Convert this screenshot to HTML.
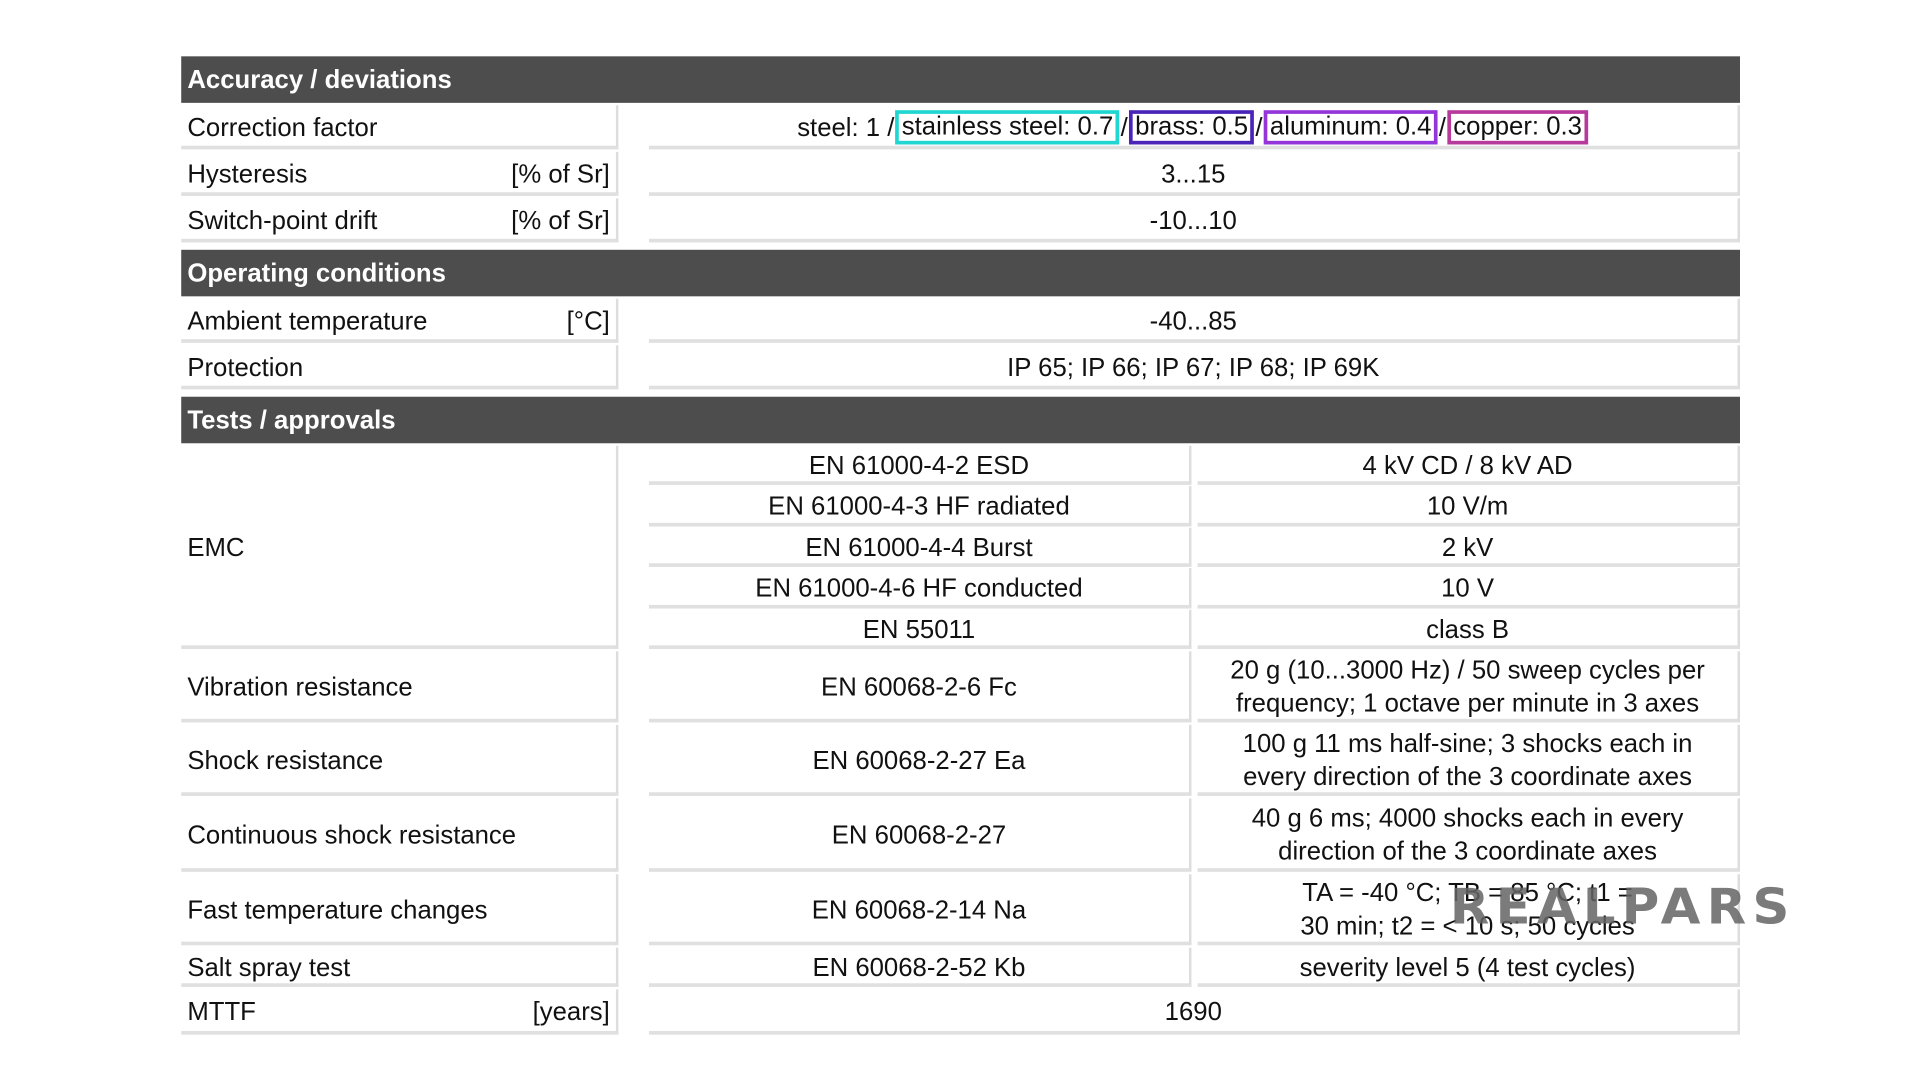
<!DOCTYPE html>
<html><head><meta charset="utf-8"><style>
html,body{margin:0;padding:0;background:#fff;width:1920px;height:1080px;overflow:hidden}
#w{position:absolute;left:0;top:0;width:1568px;height:882px;transform:scale(1.22449);transform-origin:0 0;font-family:"Liberation Sans",Arial,sans-serif;color:#111;font-size:21px}
.h{position:absolute;left:148px;width:1273px;background:#4d4d4d;color:#fff;font-weight:bold;font-size:21px;padding-left:5px;padding-top:2px;box-sizing:border-box;display:flex;align-items:center}
.c{position:absolute;background:#fff;border-right:2px solid #ddd;border-bottom:3px solid #e0e0e0;box-sizing:border-box;display:flex;align-items:center;justify-content:center;text-align:center;line-height:27px;padding-top:3px}
.l{justify-content:space-between;padding-left:5px;padding-right:5px;text-align:left}
.b{border:3px solid;padding:0 2px;margin:0 1px;line-height:22px}
#wm{position:absolute;left:1184px;top:717px;font-size:42px;font-weight:bold;color:rgba(100,100,100,0.85);letter-spacing:5px;font-family:"DejaVu Sans","Liberation Sans",sans-serif;transform:scaleY(1.0);transform-origin:0 0}
</style></head><body><div id="w">
<div class="h" style="top:46px;height:38px">Accuracy / deviations</div>
<div class="c l" style="left:148px;width:357px;top:86px;height:36px"><span>Correction factor</span></div>
<div class="c" style="left:530px;width:891px;top:86px;height:36px">steel: 1 /<span class="b" style="border-color:#1fd6d0">stainless steel: 0.7</span>/<span class="b" style="border-color:#4a24b8">brass: 0.5</span>/<span class="b" style="border-color:#9335d8">aluminum: 0.4</span>/<span class="b" style="border-color:#b8399c">copper: 0.3</span></div>
<div class="c l" style="left:148px;width:357px;top:124px;height:36px"><span>Hysteresis</span><span>[% of Sr]</span></div>
<div class="c" style="left:530px;width:891px;top:124px;height:36px">3...15</div>
<div class="c l" style="left:148px;width:357px;top:162px;height:36px"><span>Switch-point drift</span><span>[% of Sr]</span></div>
<div class="c" style="left:530px;width:891px;top:162px;height:36px">-10...10</div>
<div class="h" style="top:204px;height:38px">Operating conditions</div>
<div class="c l" style="left:148px;width:357px;top:244px;height:36px"><span>Ambient temperature</span><span>[°C]</span></div>
<div class="c" style="left:530px;width:891px;top:244px;height:36px">-40...85</div>
<div class="c l" style="left:148px;width:357px;top:282px;height:36px"><span>Protection</span></div>
<div class="c" style="left:530px;width:891px;top:282px;height:36px">IP 65; IP 66; IP 67; IP 68; IP 69K</div>
<div class="h" style="top:324px;height:38px">Tests / approvals</div>
<div class="c l" style="left:148px;width:357px;top:364px;height:166px"><span>EMC</span></div>
<div class="c" style="left:530px;width:443px;top:364px;height:32px">EN 61000-4-2 ESD</div>
<div class="c" style="left:978px;width:443px;top:364px;height:32px">4 kV CD / 8 kV AD</div>
<div class="c" style="left:530px;width:443px;top:397px;height:33px">EN 61000-4-3 HF radiated</div>
<div class="c" style="left:978px;width:443px;top:397px;height:33px">10 V/m</div>
<div class="c" style="left:530px;width:443px;top:431px;height:32px">EN 61000-4-4 Burst</div>
<div class="c" style="left:978px;width:443px;top:431px;height:32px">2 kV</div>
<div class="c" style="left:530px;width:443px;top:464px;height:33px">EN 61000-4-6 HF conducted</div>
<div class="c" style="left:978px;width:443px;top:464px;height:33px">10 V</div>
<div class="c" style="left:530px;width:443px;top:498px;height:32px">EN 55011</div>
<div class="c" style="left:978px;width:443px;top:498px;height:32px">class B</div>
<div class="c l" style="left:148px;width:357px;top:532px;height:58px"><span>Vibration resistance</span></div>
<div class="c" style="left:530px;width:443px;top:532px;height:58px">EN 60068-2-6 Fc</div>
<div class="c" style="left:978px;width:443px;top:532px;height:58px">20 g (10...3000 Hz) / 50 sweep cycles per<br>frequency; 1 octave per minute in 3 axes</div>
<div class="c l" style="left:148px;width:357px;top:592px;height:58px"><span>Shock resistance</span></div>
<div class="c" style="left:530px;width:443px;top:592px;height:58px">EN 60068-2-27 Ea</div>
<div class="c" style="left:978px;width:443px;top:592px;height:58px">100 g 11 ms half-sine; 3 shocks each in<br>every direction of the 3 coordinate axes</div>
<div class="c l" style="left:148px;width:357px;top:652px;height:60px"><span>Continuous shock resistance</span></div>
<div class="c" style="left:530px;width:443px;top:652px;height:60px">EN 60068-2-27</div>
<div class="c" style="left:978px;width:443px;top:652px;height:60px">40 g 6 ms; 4000 shocks each in every<br>direction of the 3 coordinate axes</div>
<div class="c l" style="left:148px;width:357px;top:714px;height:58px"><span>Fast temperature changes</span></div>
<div class="c" style="left:530px;width:443px;top:714px;height:58px">EN 60068-2-14 Na</div>
<div class="c" style="left:978px;width:443px;top:714px;height:58px">TA = -40 °C; TB = 85 °C; t1 =<br>30 min; t2 = &lt; 10 s; 50 cycles</div>
<div class="c l" style="left:148px;width:357px;top:774px;height:32px"><span>Salt spray test</span></div>
<div class="c" style="left:530px;width:443px;top:774px;height:32px">EN 60068-2-52 Kb</div>
<div class="c" style="left:978px;width:443px;top:774px;height:32px">severity level 5 (4 test cycles)</div>
<div class="c l" style="left:148px;width:357px;top:808px;height:37px"><span>MTTF</span><span>[years]</span></div>
<div class="c" style="left:530px;width:891px;top:808px;height:37px">1690</div>
<div id="wm" style="transform:scale(1.0,0.95)">REALPARS</div>
</div></body></html>
